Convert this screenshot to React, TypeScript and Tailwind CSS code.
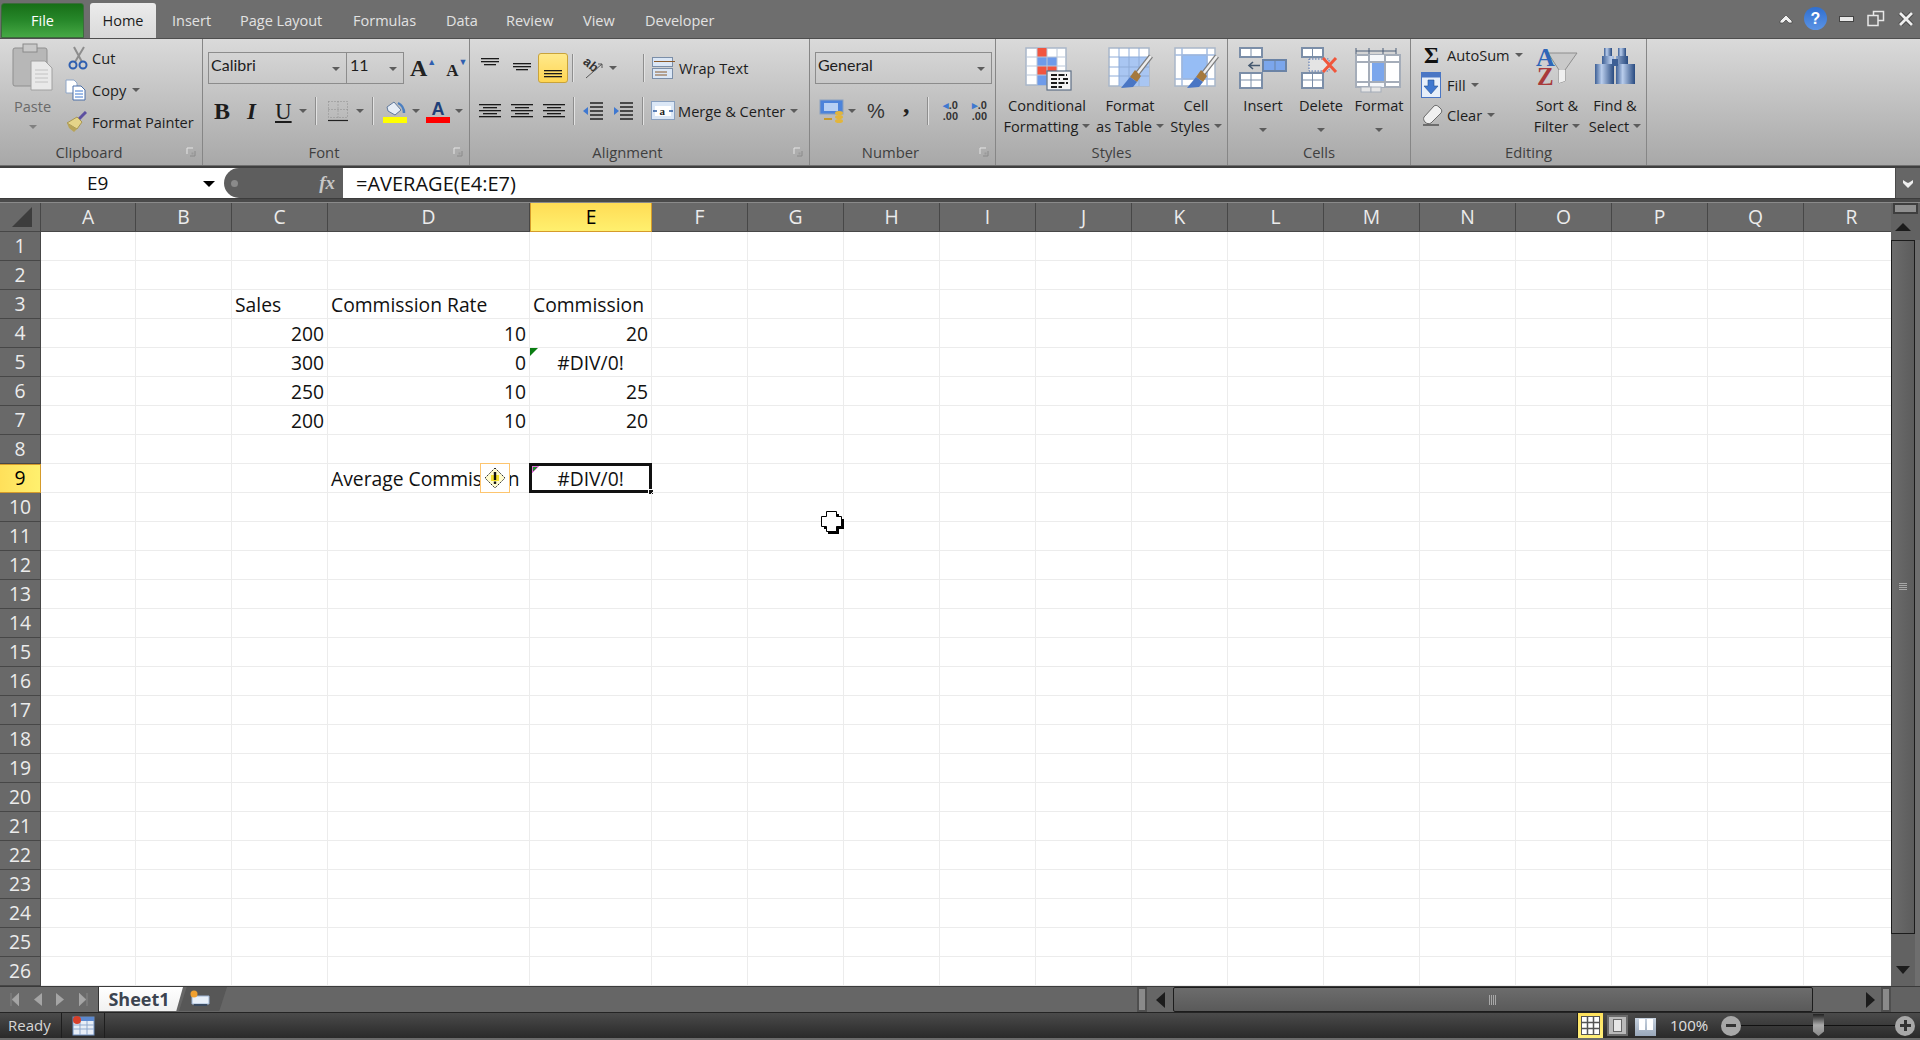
import React from 'react';

const columns = ['A', 'B', 'C', 'D', 'E', 'F', 'G', 'H', 'I', 'J', 'K', 'L', 'M', 'N', 'O', 'P', 'Q', 'R'];
const rows = Array.from({ length: 26 }, (_, i) => i + 1);

type CellValue = { text: string; align: 'left' | 'right' | 'center' };

const cells: Record<string, CellValue> = {
  C3: { text: 'Sales', align: 'left' },
  D3: { text: 'Commission Rate', align: 'left' },
  E3: { text: 'Commission', align: 'left' },
  C4: { text: '200', align: 'right' },
  D4: { text: '10', align: 'right' },
  E4: { text: '20', align: 'right' },
  C5: { text: '300', align: 'right' },
  D5: { text: '0', align: 'right' },
  E5: { text: '#DIV/0!', align: 'center' },
  C6: { text: '250', align: 'right' },
  D6: { text: '10', align: 'right' },
  E6: { text: '25', align: 'right' },
  C7: { text: '200', align: 'right' },
  D7: { text: '10', align: 'right' },
  E7: { text: '20', align: 'right' },
  D9: { text: 'Average Commission', align: 'left' },
  E9: { text: '#DIV/0!', align: 'center' },
};

const alignClass = {
  left: 'justify-start pl-[3px]',
  right: 'justify-end pr-[3px]',
  center: 'justify-center',
};

function Caret({ className = '' }: { className?: string }) {
  return <span className={`inline-block w-0 h-0 border-x-[4px] border-t-[4px] border-x-transparent border-t-[#5c5c5c] ${className}`} />;
}

function Lines({ widths, top = 0, color = '#1a1a1a' }: { widths: number[]; top?: number; color?: string }) {
  return (
    <svg width="24" height="20" viewBox="0 0 24 20">
      {widths.map((w, i) => (
        <rect key={i} x={(24 - w) / 2} y={top + i * 3} width={w} height="1.3" fill={color} />
      ))}
    </svg>
  );
}

function Launcher() {
  return (
    <svg className="absolute right-[6px] bottom-[8px]" width="10" height="10" viewBox="0 0 10 10">
      <path d="M1 1H7M1 1V7" stroke="#e4e4e4" fill="none" />
      <path d="M9 4V9H4" stroke="#8a8a8a" fill="none" />
      <rect x="5.5" y="5.5" width="2" height="2" fill="#9a9a9a" />
    </svg>
  );
}

function Group({ className, label, launcher, children }: { className: string; label: string; launcher?: boolean; children: React.ReactNode }) {
  return (
    <div className={`relative flex flex-col border-r border-[#868686] ${className}`}>
      <div className="h-[101px] overflow-visible">{children}</div>
      <div className={`h-[24px] flex items-center justify-center text-[14.8px] text-[#3f3f3f] ${launcher ? 'pr-[24px]' : ''}`}>{label}</div>
      {launcher && <Launcher />}
    </div>
  );
}

function VSep({ className = '' }: { className?: string }) {
  return <div className={`w-[2px] h-[28px] bg-[#8e8e8e] border-r border-[#e2e2e2] ${className}`} />;
}

function Brush() {
  return (
    <g>
      <path d="M44 9L30 27" stroke="#7c7c7c" strokeWidth="5" />
      <path d="M44 9L30 27" stroke="#ededed" strokeWidth="2.5" />
      <path d="M28 23L34 29L30 35L23 30Z" fill="#a5793d" />
      <path d="M23 30L30 35L26 40L14 41Z" fill="#4a76c4" />
    </g>
  );
}

function ConditionalIcon() {
  return (
    <svg width="50" height="44" viewBox="0 0 50 44">
      <rect x="2" y="1" width="40" height="37" fill="#fff" stroke="#a9b7c9" strokeWidth="1.5" />
      <rect x="13" y="1" width="10" height="9" fill="#f2553f" />
      <rect x="13" y="10" width="20" height="9" fill="#6e9bea" />
      <rect x="13" y="19" width="20" height="9" fill="#f2553f" />
      <rect x="13" y="28" width="10" height="10" fill="#6e9bea" />
      <path d="M2 10H42M2 19H42M2 28H42M13 1V38M23 1V38M33 1V38" stroke="#b9c6d8" strokeWidth="1" fill="none" />
      <rect x="23" y="24" width="24" height="19" fill="#f4f4f4" stroke="#5e6f85" strokeWidth="1.2" />
      <path d="M27 28H43M27 32H36M39 32H44M27 36H44M27 40H38" stroke="#1a1a1a" strokeWidth="2" strokeDasharray="6 1.5" />
    </svg>
  );
}

function FormatTableIcon() {
  return (
    <svg width="50" height="44" viewBox="0 0 50 44">
      <rect x="2" y="1" width="40" height="38" fill="#fff" stroke="#a9b7c9" strokeWidth="1.5" />
      <rect x="12" y="10" width="30" height="29" fill="#a9c6f2" />
      <path d="M2 10H42M2 20H42M2 29H42M12 1V39M22 1V39M32 1V39" stroke="#8facd8" strokeWidth="1" fill="none" />
      <Brush />
    </svg>
  );
}

function CellStylesIcon() {
  return (
    <svg width="50" height="44" viewBox="0 0 50 44">
      <rect x="2" y="1" width="40" height="38" fill="#fff" stroke="#a9b7c9" strokeWidth="1.5" />
      <rect x="9" y="8" width="25" height="24" fill="#96bdf5" stroke="#6f97d8" />
      <path d="M2 8H42M2 32H42M9 1V39M34 1V39" stroke="#a4bce0" strokeWidth="1.5" fill="none" />
      <Brush />
    </svg>
  );
}

function InsertIcon() {
  return (
    <svg width="48" height="42" viewBox="0 0 48 42">
      <rect x="1" y="1" width="22" height="9" fill="#fff" stroke="#7b8ea8" strokeWidth="2" />
      <path d="M12 1V10" stroke="#7b8ea8" />
      <rect x="1" y="26" width="22" height="15" fill="#fff" stroke="#7b8ea8" strokeWidth="2" />
      <path d="M12 26V41M1 33H23" stroke="#7b8ea8" />
      <rect x="24" y="13" width="23" height="11" fill="#7ba6ec" stroke="#6b83a5" strokeWidth="2" />
      <path d="M36 13V24" stroke="#6b83a5" />
      <path d="M21 18.5H11M14 15L10 18.5L14 22" stroke="#45586f" strokeWidth="1.6" fill="none" />
    </svg>
  );
}

function DeleteIcon() {
  return (
    <svg width="40" height="42" viewBox="0 0 40 42">
      <rect x="1" y="1" width="21" height="9" fill="#fff" stroke="#7b8ea8" strokeWidth="2" />
      <path d="M11.500 1V10" stroke="#7b8ea8" />
      <rect x="1" y="26" width="21" height="15" fill="#fff" stroke="#7b8ea8" strokeWidth="2" />
      <path d="M11.500 26V41M1 33H22" stroke="#7b8ea8" />
      <rect x="8" y="12" width="20" height="12" fill="#e4e4e4" stroke="#4d6fb0" strokeDasharray="1.500 1.500" />
      <path d="M22 11L35 25M35 11L22 25" stroke="#f0563b" strokeWidth="3" />
    </svg>
  );
}

function FormatCellsIcon() {
  return (
    <svg width="48" height="46" viewBox="0 0 48 46">
      <path d="M1 1V7M41 1V7M1 4H41M14 1V7M28 1V7" stroke="#4c5f78" strokeWidth="1" fill="none" />
      <rect x="1" y="8" width="44" height="32" fill="#fff" stroke="#a5adb9" strokeWidth="2" />
      <rect x="14" y="8" width="16" height="32" fill="#f5f7fa" />
      <rect x="17" y="15" width="13" height="20" fill="#7ba6ec" />
      <path d="M1 15H45M1 35H45M14 8V40M30 8V40" stroke="#a5adb9" strokeWidth="2" fill="none" />
      <rect x="6" y="40" width="10" height="5" fill="#e6e6e6" stroke="#a5adb9" />
      <rect x="16" y="40" width="10" height="5" fill="#e6e6e6" stroke="#a5adb9" />
    </svg>
  );
}

function SortIcon() {
  return (
    <svg width="42" height="42" viewBox="0 0 42 42" className="overflow-visible">
      <path d="M12 7H41L29 24V35L23 37V24Z" fill="#c9c9c9" stroke="#8e8e8e" />
      <path d="M23 24H29V35L23 37Z" fill="#efefef" />
      <text x="0" y="20" fontFamily="Liberation Serif" fontWeight="700" fontSize="26" fill="#2f66b8">A</text>
      <text x="1" y="39" fontFamily="Liberation Serif" fontWeight="700" fontSize="25" fill="#a83a3a">Z</text>
    </svg>
  );
}

function FindIcon() {
  return (
    <svg width="42" height="38" viewBox="0 0 42 38">
      <defs>
        <linearGradient id="binoc" x1="0" y1="0" x2="1" y2="0">
          <stop offset="0" stopColor="#3d5f95" />
          <stop offset="0.35" stopColor="#b9cdec" />
          <stop offset="1" stopColor="#284a80" />
        </linearGradient>
      </defs>
      <rect x="10" y="1" width="8" height="8" fill="url(#binoc)" />
      <rect x="24" y="1" width="8" height="8" fill="url(#binoc)" />
      <path d="M8 9H20V18H8ZM22 9H34V18H22Z" fill="url(#binoc)" />
      <rect x="1" y="17" width="19" height="20" fill="url(#binoc)" />
      <rect x="22" y="17" width="19" height="20" fill="url(#binoc)" />
      <rect x="18" y="12" width="6" height="7" fill="#3d5f95" />
    </svg>
  );
}

function Ribbon() {
  return (
    <div className="h-[127px] flex bg-gradient-to-b from-[#dadada] to-[#a8a8a8] border-t border-[#4e4e4e] font-['Open_Sans',sans-serif] text-[14.6px] text-[#1d1d1d] leading-none">
      <Group className="w-[203px]" label="Clipboard" launcher>
        <div className="flex">
          <div className="w-[65px] flex flex-col items-center pt-[4px]">
            <svg width="42" height="48" viewBox="0 0 42 48">
              <rect x="1" y="5" width="34" height="38" rx="2" fill="#b7b7b7" stroke="#8f8f8f" />
              <rect x="11" y="1" width="14" height="8" fill="#c9c9c9" stroke="#8a8a8a" />
              <path d="M19 18H33L40 25V47H19Z" fill="#e9e9e9" stroke="#a0a0a0" />
              <path d="M23 27H36M23 31H36M23 35H36M23 39H36" stroke="#c2c2c2" />
            </svg>
            <span className="mt-[8px] text-[#6a6a6a]">Paste</span>
            <Caret className="mt-[11px] border-t-[#808080]" />
          </div>
          <div className="flex flex-col pt-[3px]">
            <div className="h-[32px] flex items-center">
              <svg width="22" height="24" viewBox="0 0 22 24" className="ml-[2px] mr-[3px]">
                <path d="M7 1L15 16M17 1L8 16" stroke="#8d8d8d" strokeWidth="2" />
                <circle cx="6" cy="19" r="3.500" fill="none" stroke="#2f5fb0" strokeWidth="2" />
                <circle cx="16" cy="19" r="3.500" fill="none" stroke="#2f5fb0" strokeWidth="2" />
              </svg>
              <span>Cut</span>
            </div>
            <div className="h-[32px] flex items-center">
              <svg width="22" height="22" viewBox="0 0 22 22" className="mr-[5px]">
                <path d="M1 1H9L12 4V14H1Z" fill="#fff" stroke="#8ea6c8" />
                <path d="M8 7H16L20 11V21H8Z" fill="#fff" stroke="#4a6fa8" />
                <path d="M10 12H18M10 15H18M10 18H18" stroke="#3f78d0" />
              </svg>
              <span>Copy</span>
              <Caret className="ml-[6px]" />
            </div>
            <div className="h-[32px] flex items-center">
              <svg width="22" height="22" viewBox="0 0 22 22" className="mr-[5px]">
                <path d="M21 1L14 8" stroke="#5c4fa0" strokeWidth="3" />
                <path d="M12 6L17 11L12 18L2 12Z" fill="#e5d489" stroke="#a89754" />
                <path d="M2 12L12 18L9 21L4 17Z" fill="#b8a458" />
              </svg>
              <span>Format Painter</span>
            </div>
          </div>
        </div>
      </Group>

      <Group className="w-[267px]" label="Font" launcher>
        <div className="pt-[13px] flex items-center h-[45px] pl-[5px]">
          <div className="w-[139px] h-[32px] border border-[#8c8c8c] flex items-center justify-between pl-[2px] pr-[6px] pb-[6px]">
            <span className="font-['Lato'] text-[16px]">Calibri</span>
            <Caret className="mt-[8px]" />
          </div>
          <div className="w-[57px] h-[32px] border border-l-0 border-[#8c8c8c] flex items-center justify-between pl-[3px] pr-[6px] pb-[6px]">
            <span className="font-['Lato'] text-[16px]">11</span>
            <Caret className="mt-[8px]" />
          </div>
          <span className="ml-[6px] font-['Liberation_Serif'] font-bold text-[24px] text-[#222]">A</span>
          <span className="text-[#2f5fb0] text-[9px] -mt-[14px]">▲</span>
          <span className="ml-[10px] font-['Liberation_Serif'] font-bold text-[17px] text-[#222] mt-[4px]">A</span>
          <span className="text-[#2f5fb0] text-[9px] -mt-[14px]">▼</span>
        </div>
        <div className="mt-[11px] flex items-center h-[32px] pl-[11px]">
          <span className="w-[20px] font-['Liberation_Serif'] font-bold text-[24px] text-[#1c1c1c]">B</span>
          <span className="ml-[13px] w-[12px] font-['Liberation_Serif'] italic font-bold text-[23px] text-[#1c1c1c]">I</span>
          <span className="ml-[16px] w-[17px] font-['Liberation_Serif'] underline text-[23px] text-[#1c1c1c]">U</span>
          <Caret className="ml-[7px]" />
          <VSep className="ml-[8px]" />
          <svg width="22" height="22" viewBox="0 0 22 22" className="ml-[10px]">
            <rect x="1.500" y="1.500" width="19" height="16" fill="none" stroke="#8c8c8c" strokeDasharray="1 2" />
            <path d="M11 1.500V17.500M1.500 9.500H20.500" stroke="#8c8c8c" strokeDasharray="1 2" />
            <path d="M1 20.500H21" stroke="#222" strokeWidth="1.200" />
          </svg>
          <Caret className="ml-[7px]" />
          <VSep className="ml-[8px]" />
          <div className="ml-[9px] flex flex-col items-center w-[24px]">
            <svg width="22" height="17" viewBox="0 0 22 17">
              <path d="M3 7L10 2L17 10L11 15L4 11Z" fill="#e6edf6" stroke="#627a9c" />
              <path d="M14 3C18 5 20 9 20 13" stroke="#4c7fc0" strokeWidth="2.500" fill="none" />
            </svg>
            <div className="w-[24px] h-[6px] bg-[#ffff00]" />
          </div>
          <Caret className="ml-[5px]" />
          <div className="ml-[6px] flex flex-col items-center w-[24px]">
            <span className="font-['Liberation_Sans'] font-bold text-[18px] text-[#1f3f78] h-[17px] leading-[18px]">A</span>
            <div className="w-[24px] h-[6px] bg-[#ff0000]" />
          </div>
          <Caret className="ml-[5px]" />
        </div>
      </Group>

      <Group className="w-[340px]" label="Alignment" launcher>
        <div className="pt-[13px] flex items-center h-[45px] pl-[8px]">
          <div className="w-[24px] h-[24px]"><Lines widths={[18, 18, 12]} top={2} /></div>
          <div className="ml-[8px] w-[24px] h-[24px]"><Lines widths={[18, 18, 12]} top={7} /></div>
          <div className="ml-[4px] w-[30px] h-[30px] flex items-end justify-center bg-gradient-to-b from-[#ffe98a] to-[#ffd652] border border-[#c9a33a] rounded-[3px]">
            <Lines widths={[18, 18, 18]} top={8} />
          </div>
          <VSep className="ml-[4px]" />
          <svg width="24" height="24" viewBox="0 0 24 24" className="ml-[7px] overflow-visible">
            <text x="1" y="12" transform="rotate(40 8 10)" fontFamily="Liberation Sans" fontWeight="700" fontSize="13" fill="#333">ab</text>
            <path d="M5 22L21 8M17 8H21V12" stroke="#555" fill="none" />
          </svg>
          <Caret className="ml-[4px]" />
          <VSep className="ml-[26px]" />
          <svg width="24" height="24" viewBox="0 0 24 24" className="ml-[7px]">
            <rect x="0.500" y="1.500" width="20" height="9" fill="#dbe7f6" stroke="#7b8ea8" />
            <rect x="0.500" y="12.500" width="20" height="10" fill="#dbe7f6" stroke="#7b8ea8" />
            <path d="M2 5.500H23M3 16H15M3 19H15" stroke="#8a5a2c" />
          </svg>
          <span className="ml-[3px]">Wrap Text</span>
        </div>
        <div className="mt-[11px] flex items-center h-[32px] pl-[8px]">
          <div className="w-[24px] h-[20px]"><Lines widths={[22, 14, 22, 14, 22]} top={3} /></div>
          <div className="ml-[8px] w-[24px] h-[20px]"><Lines widths={[22, 14, 22, 14, 22]} top={3} /></div>
          <div className="ml-[8px] w-[24px] h-[20px]"><Lines widths={[22, 14, 22, 14, 22]} top={3} /></div>
          <VSep className="ml-[7px]" />
          <svg width="22" height="20" viewBox="0 0 22 20" className="ml-[7px]">
            <path d="M8 2H21M8 6H21M8 10H21M8 14H21M8 18H21" stroke="#222" strokeWidth="1.300" />
            <path d="M1 10L6 6V14Z" fill="#3f78d0" />
          </svg>
          <svg width="22" height="20" viewBox="0 0 22 20" className="ml-[8px]">
            <path d="M8 2H21M8 6H21M8 10H21M8 14H21M8 18H21" stroke="#222" strokeWidth="1.300" />
            <path d="M7 10L2 6V14Z" fill="#3f78d0" />
          </svg>
          <VSep className="ml-[8px]" />
          <svg width="24" height="20" viewBox="0 0 24 20" className="ml-[7px]">
            <rect x="0.500" y="0.500" width="23" height="18" fill="#dbe7f6" stroke="#8aa0be" />
            <rect x="4" y="5" width="16" height="10" fill="#fff" />
            <path d="M2 10H6M22 10H18" stroke="#2c5ba0" strokeWidth="1.500" />
            <text x="8.500" y="14" fontFamily="Liberation Serif" fontWeight="700" fontSize="11" fill="#222">a</text>
          </svg>
          <span className="ml-[3px]">Merge &amp; Center</span>
          <Caret className="ml-[5px]" />
        </div>
      </Group>

      <Group className="w-[186px]" label="Number" launcher>
        <div className="pt-[13px] flex items-center h-[45px] pl-[5px]">
          <div className="w-[177px] h-[32px] border border-[#8c8c8c] flex items-center justify-between pl-[2px] pr-[6px] pb-[6px]">
            <span className="font-['Lato'] text-[16px]">General</span>
            <Caret className="mt-[8px]" />
          </div>
        </div>
        <div className="mt-[11px] flex items-center h-[32px] pl-[9px]">
          <svg width="25" height="24" viewBox="0 0 25 24">
            <rect x="1" y="1" width="23" height="14" fill="#4c83da" stroke="#8aa0be" />
            <rect x="5" y="4" width="14" height="8" fill="#b7d0f3" />
            <ellipse cx="20" cy="14" rx="4" ry="2" fill="#e2b53b" />
            <ellipse cx="20" cy="18" rx="4" ry="2" fill="#e2b53b" />
            <ellipse cx="20" cy="22" rx="4" ry="2" fill="#e2b53b" />
            <path d="M5 20H13" stroke="#c79a2a" strokeWidth="2" />
          </svg>
          <Caret className="ml-[4px]" />
          <span className="ml-[11px] w-[20px] text-[20px] text-[#333] font-['Liberation_Sans']">%</span>
          <span className="ml-[16px] w-[8px] font-['Liberation_Serif'] font-bold text-[26px] -mt-[12px] text-[#222]">,</span>
          <VSep className="ml-[16px]" />
          <div className="ml-[9px] w-[20px] flex flex-col items-end font-['Liberation_Sans'] text-[11px] leading-[11px] font-bold text-[#333]">
            <span><span className="text-[#3f78d0]">◂</span>.0</span>
            <span>.00</span>
          </div>
          <div className="ml-[9px] w-[20px] flex flex-col items-end font-['Liberation_Sans'] text-[11px] leading-[11px] font-bold text-[#333]">
            <span><span className="text-[#3f78d0]">▸</span>.0</span>
            <span>.00</span>
          </div>
        </div>
      </Group>

      <Group className="w-[232px]" label="Styles">
        <div className="flex pt-[8px] text-center">
          <div className="w-[98px] flex flex-col items-center pl-[4px]">
            <div className="h-[44px] ml-[4px]"><ConditionalIcon /></div>
            <span className="mt-[7px]">Conditional</span>
            <span className="mt-[6px] flex items-center whitespace-nowrap">Formatting<Caret className="ml-[4px]" /></span>
          </div>
          <div className="w-[72px] flex flex-col items-center">
            <div className="h-[44px] ml-[4px]"><FormatTableIcon /></div>
            <span className="mt-[7px]">Format</span>
            <span className="mt-[6px] flex items-center whitespace-nowrap">as Table<Caret className="ml-[4px]" /></span>
          </div>
          <div className="w-[60px] flex flex-col items-center">
            <div className="h-[44px] ml-[4px]"><CellStylesIcon /></div>
            <span className="mt-[7px]">Cell</span>
            <span className="mt-[6px] flex items-center whitespace-nowrap">Styles<Caret className="ml-[4px]" /></span>
          </div>
        </div>
      </Group>

      <Group className="w-[183px]" label="Cells">
        <div className="flex pt-[8px] pl-[6px]">
          {[
            { label: 'Insert', icon: <InsertIcon /> },
            { label: 'Delete', icon: <DeleteIcon /> },
            { label: 'Format', icon: <FormatCellsIcon /> },
          ].map((item) => (
            <div key={item.label} className="w-[58px] flex flex-col items-center">
              <div className="h-[44px] flex items-start justify-center">{item.icon}</div>
              <span className="mt-[7px]">{item.label}</span>
              <Caret className="mt-[15px]" />
            </div>
          ))}
        </div>
      </Group>

      <Group className="w-[236px]" label="Editing">
        <div className="flex">
          <div className="w-[117px] pl-[10px] pt-[1px] flex flex-col">
            <div className="h-[30px] flex items-center">
              <span className="w-[26px] pl-[3px] font-['Liberation_Serif'] font-bold text-[23px] text-[#111]">Σ</span>
              <span>AutoSum</span>
              <Caret className="ml-[5px]" />
            </div>
            <div className="h-[30px] flex items-center">
              <svg width="20" height="26" viewBox="0 0 20 26" className="mr-[6px]">
                <rect x="0.500" y="0.500" width="19" height="25" fill="#e7effa" stroke="#4a76c4" />
                <rect x="0.500" y="0.500" width="19" height="5" fill="#4a76c4" />
                <path d="M7 8H13V14H17L10 22L3 14H7Z" fill="#3f78d0" stroke="#27508f" strokeWidth="0.600" />
              </svg>
              <span>Fill</span>
              <Caret className="ml-[5px]" />
            </div>
            <div className="h-[30px] flex items-center">
              <svg width="22" height="22" viewBox="0 0 22 22" className="mr-[4px]">
                <path d="M3 13L13 2C14 1 16 1 18 3L20 5C21 6 21 8 20 9L10 19C8 20 6 20 4 18C3 17 2 15 3 13Z" fill="#f0f0f0" stroke="#6a6a6a" />
                <path d="M2 21H18" stroke="#222" />
              </svg>
              <span>Clear</span>
              <Caret className="ml-[5px]" />
            </div>
          </div>
          <div className="w-[58px] flex flex-col items-center pt-[7px]">
            <div className="h-[44px]"><SortIcon /></div>
            <span className="mt-[8px]">Sort &amp;</span>
            <span className="mt-[6px] flex items-center">Filter<Caret className="ml-[4px]" /></span>
          </div>
          <div className="w-[58px] flex flex-col items-center pt-[8px]">
            <div className="h-[43px]"><FindIcon /></div>
            <span className="mt-[8px]">Find &amp;</span>
            <span className="mt-[6px] flex items-center">Select<Caret className="ml-[4px]" /></span>
          </div>
        </div>
      </Group>
    </div>
  );
}

function FormulaBar() {
  return (
    <div className="h-[38px] flex flex-col bg-[#6a6a6a]">
      <div className="h-[3px] bg-[#3f3f3f] border-t border-[#6e6e6e]" />
      <div className="h-[30px] flex bg-white font-['Open_Sans',sans-serif] text-[19px] text-[#111]">
        <div className="w-[224px] flex items-center justify-between pl-[87px] pr-[9px] pt-[1px]">
          <span>E9</span>
          <span className="w-0 h-0 border-x-[6px] border-t-[6px] border-x-transparent border-t-black" />
        </div>
        <div className="w-[119px] bg-[#5e5e5e] rounded-l-[15px] flex items-center justify-between pl-[7px] pr-[8px]">
          <span className="w-[7px] h-[7px] rounded-full bg-[#8a8a8a]" />
          <span className="font-['Liberation_Serif'] italic font-bold text-[19px] text-[#c7c7c7]">fx</span>
        </div>
        <div className="flex-1 flex items-center pl-[13px] pt-[1px] text-[20px]">=AVERAGE(E4:E7)</div>
        <div className="w-[25px] bg-[#666] border-l border-[#4a4a4a] flex items-center justify-center">
          <svg width="12" height="9" viewBox="0 0 12 9"><path d="M1 1L4 3L6 4L8 3L11 1V4L6 9L1 4Z" fill="#eee" /></svg>
        </div>
      </div>
      <div className="flex-1 bg-[#4a4a4a] border-t border-[#3c3c3c] border-b border-b-[#8a8a8a]" />
    </div>
  );
}

function Sheet() {
  return (
    <div className="relative grid grid-cols-[41px_95px_96px_96px_202px_122px_repeat(13,96px)] auto-rows-[29px] font-['Open_Sans',sans-serif] text-[19.3px] text-[#111] bg-white overflow-hidden">
      <div className="bg-[#696969] border-b border-r border-[#474747] flex items-center justify-center">
        <svg width="20" height="20" viewBox="0 0 20 20" className="ml-[4px]"><path d="M20 0V20H0Z" fill="#3d3d3d" /></svg>
      </div>
      {columns.map((col) => (
        <div
          key={col}
          className={col === 'E'
            ? 'flex items-center justify-center bg-gradient-to-b from-[#ffdc55] to-[#fff06e] border border-t-0 border-[#d59b2a] text-black'
            : 'flex items-center justify-center bg-[#696969] border-r border-b border-[#474747] text-[#ececec]'}
        >
          {col}
        </div>
      ))}
      {rows.map((row) => (
        <React.Fragment key={row}>
          <div
            className={row === 9
              ? 'flex items-center justify-center bg-gradient-to-r from-[#ffe05a] to-[#fff06e] border border-l-0 border-[#d59b2a] text-black'
              : 'flex items-center justify-center bg-[#696969] border-r border-b border-[#474747] text-[#ececec]'}
          >
            {row}
          </div>
          {columns.map((col) => {
            const id = `${col}${row}`;
            const value = cells[id];
            return (
              <div key={id} className="relative border-r border-b border-[#ececec]">
                {value && (
                  <div className={`absolute inset-0 pt-[3px] flex items-center whitespace-nowrap ${alignClass[value.align]}`}>{value.text}</div>
                )}
                {id === 'E5' && (
                  <svg className="absolute left-0 top-0" width="8" height="8" viewBox="0 0 8 8"><path d="M0 0H8L0 8Z" fill="#0a7d12" /></svg>
                )}
                {id === 'D9' && (
                  <div className="absolute right-[19px] -top-px w-[30px] h-[30px] bg-white border border-[#fdc56f] flex items-center justify-center">
                    <svg width="22" height="22" viewBox="0 0 22 22">
                      <path d="M11 1L21 11L11 21L1 11Z" fill="#fffbd0" stroke="#222" strokeDasharray="1.500 1" />
                      <path d="M7 11H15" stroke="#f4e12f" strokeWidth="6" />
                      <rect x="9.800" y="5" width="2.400" height="8" fill="#111" />
                      <rect x="9.800" y="14.500" width="2.400" height="2.400" fill="#111" />
                    </svg>
                  </div>
                )}
                {id === 'E9' && (
                  <>
                    <div className="absolute -left-px -top-px w-[123px] h-[30px] border-[3px] border-[#111]" />
                    <svg className="absolute left-[2px] top-[2px]" width="7" height="7" viewBox="0 0 7 7"><path d="M0.500 0.500H6.500L0.500 6.500Z" fill="#1f8f2a" stroke="#e070d8" /></svg>
                    <div className="absolute -right-[3px] -bottom-[3px] w-[6px] h-[6px] bg-[#111] border border-white" />
                  </>
                )}
              </div>
            );
          })}
        </React.Fragment>
      ))}
      <svg className="absolute left-[821px] top-[308px]" width="23" height="23" viewBox="0 0 23 23">
        <path d="M7 3H18V8H23V18H18V23H7V18H3V8H7Z" fill="#000" />
        <path d="M5.500 0.500H15.500V5.500H20.500V15.500H15.500V20.500H5.500V15.500H0.500V5.500H5.500Z" fill="#fff" stroke="#000" />
      </svg>
    </div>
  );
}

function VerticalScroll() {
  return (
    <div className="w-[29px] h-[783px] flex flex-col bg-[#626262] overflow-hidden">
      <div className="h-[11px] mx-[2px] bg-[#8f8f8f] border-2 border-[#3e3e3e]" />
      <div className="h-[26px] flex items-center justify-center pr-[5px]">
        <span className="w-0 h-0 border-x-[8px] border-b-[8px] border-x-transparent border-b-[#1c1c1c]" />
      </div>
      <div className="flex flex-1 min-h-0">
        <div className="w-[24px] flex flex-col">
          <div className="h-[694px] bg-gradient-to-r from-[#6c6c6c] to-[#5c5c5c] border-x border-y border-[#1c1c1c] flex items-center justify-center">
            <svg width="8" height="8" viewBox="0 0 8 8"><path d="M0 0.500H8M0 2.500H8M0 4.500H8M0 6.500H8" stroke="#a8a8a8" /></svg>
          </div>
          <div className="flex-1 flex items-center justify-center pt-[20px]">
            <span className="w-0 h-0 border-x-[7px] border-t-[8px] border-x-transparent border-t-[#1c1c1c]" />
          </div>
        </div>
        <div className="flex-1 bg-[#6e6e6e]" />
      </div>
    </div>
  );
}

function TabStrip() {
  return (
    <div className="h-[26px] flex bg-[#666] border-t border-[#3a3a3a]">
      <div className="w-[99px] flex items-center justify-between px-[9px] border-r border-[#333] bg-[#6a6a6a]">
        <svg width="10" height="13" viewBox="0 0 10 13"><path d="M2 0V13M10 0L3 6.500L10 13Z" fill="#a5a5a5" stroke="#a5a5a5" strokeWidth="0.500" /></svg>
        <svg width="8" height="13" viewBox="0 0 8 13"><path d="M8 0L0 6.500L8 13Z" fill="#a5a5a5" /></svg>
        <svg width="8" height="13" viewBox="0 0 8 13"><path d="M0 0L8 6.500L0 13Z" fill="#a5a5a5" /></svg>
        <svg width="10" height="13" viewBox="0 0 10 13"><path d="M8 0V13M0 0L7 6.500L0 13Z" fill="#a5a5a5" stroke="#a5a5a5" strokeWidth="0.500" /></svg>
      </div>
      <div className="w-[84px] h-[24px] bg-gradient-to-b from-white to-[#f1f1f1] flex items-center justify-center pr-[4px] font-['Open_Sans',sans-serif] font-bold text-[18px] text-[#3c4450] [clip-path:polygon(0_0,100%_0,92%_100%,0_100%)]">Sheet1</div>
      <div className="w-[48px] h-[24px] -ml-[4px] bg-[#575757] flex items-center justify-center pr-[6px] [clip-path:polygon(16%_0,100%_0,84%_100%,0_100%)]">
        <svg width="22" height="18" viewBox="0 0 22 18">
          <path d="M3 6H20V14H3Z" fill="#e8f0fa" stroke="#9db4d4" />
          <path d="M5 15H18" stroke="#3a4a60" strokeWidth="2" />
          <circle cx="5" cy="4" r="3.500" fill="#f0a030" />
        </svg>
      </div>
      <div className="w-[910px] bg-[#666]" />
      <div className="w-[10px] h-[25px] bg-[#8a8a8a] border-2 border-[#4e4e4e]" />
      <div className="w-[26px] flex items-center justify-center">
        <span className="w-0 h-0 border-y-[8px] border-r-[9px] border-y-transparent border-r-[#1c1c1c]" />
      </div>
      <div className="w-[640px] h-[25px] bg-gradient-to-b from-[#6c6c6c] to-[#5a5a5a] border border-[#1c1c1c] rounded-[2px] flex items-center justify-center">
        <svg width="8" height="10" viewBox="0 0 8 10"><path d="M0.500 0V10M2.500 0V10M4.500 0V10M6.500 0V10" stroke="#a8a8a8" /></svg>
      </div>
      <div className="w-[68px] flex items-center justify-end pr-[6px]">
        <span className="w-0 h-0 border-y-[8px] border-l-[9px] border-y-transparent border-l-[#1c1c1c]" />
      </div>
      <div className="w-[10px] h-[25px] bg-[#8a8a8a] border-2 border-[#4e4e4e]" />
      <div className="flex-1 bg-[#626262]" />
    </div>
  );
}

function StatusBar() {
  return (
    <div className="h-[26px] flex items-center bg-gradient-to-b from-[#4b4b4b] to-[#2a2a2a] border-t border-[#242424] font-['Open_Sans',sans-serif] text-[15px] text-[#d6d6d6]">
      <span className="w-[62px] pl-[8px] h-full flex items-center border-r border-[#1e1e1e]">Ready</span>
      <div className="w-[43px] h-full flex items-center justify-center border-r border-[#1e1e1e]">
        <svg width="23" height="20" viewBox="0 0 23 20">
          <rect x="1" y="1" width="21" height="18" fill="#e8eef7" stroke="#6f8fc0" />
          <rect x="1" y="1" width="21" height="4" fill="#5b88cf" />
          <path d="M1 9H22M1 13H22M8 5V19M15 5V19" stroke="#8fa8cc" />
          <circle cx="5" cy="4" r="4" fill="#d8402a" />
        </svg>
      </div>
      <div className="flex-1" />
      <div className="w-[26px] h-full bg-gradient-to-b from-[#ffe25c] to-[#ffef7a] flex items-center justify-center border-l border-[#1e1e1e]">
        <svg width="19" height="19" viewBox="0 0 19 19">
          <rect x="0.500" y="0.500" width="18" height="18" fill="#fff" stroke="#555" />
          <path d="M0 6.500H19M0 12.500H19M6.500 0V19M12.500 0V19" stroke="#555" strokeWidth="1.500" />
        </svg>
      </div>
      <div className="ml-[4px] w-[21px] h-[21px] bg-[#b9b9b9] border-2 border-[#6a6a6a] flex items-center justify-center">
        <div className="w-[9px] h-[13px] bg-[#e6e6e6] border border-[#666]" />
      </div>
      <div className="ml-[7px] w-[21px] h-[21px] bg-gradient-to-b from-[#c7d2df] to-[#9aa8ba] border-t-[3px] border-[#444] flex gap-[2px] pt-[1px] justify-center">
        <div className="w-[6px] h-[11px] bg-white" />
        <div className="w-[6px] h-[11px] bg-white" />
      </div>
      <span className="ml-[14px] w-[43px] text-[#e0e0e0]">100%</span>
      <div className="ml-[8px] w-[20px] h-[20px] rounded-full bg-[#a8a8a8] flex items-center justify-center">
        <div className="w-[10px] h-[3px] bg-[#333]" />
      </div>
      <div className="relative w-[154px] h-[1px] bg-[#111]">
        <div className="absolute left-[72px] -top-[11px] w-[11px] h-[22px] bg-gradient-to-b from-[#222] via-[#aaa] to-[#888] [clip-path:polygon(0_0,100%_0,100%_80%,50%_100%,0_80%)]" />
      </div>
      <div className="w-[20px] h-[20px] rounded-full bg-[#a8a8a8] flex items-center justify-center mr-[5px] relative">
        <div className="w-[11px] h-[3px] bg-[#333]" />
        <div className="absolute w-[3px] h-[11px] bg-[#333]" />
      </div>
    </div>
  );
}

export default function App() {
  return (
    <div className="w-[1920px] h-[1040px] overflow-hidden flex flex-col bg-[#6b6b6b]">
      <div className="h-[38px] flex items-center bg-[#6e6e6e] font-['Open_Sans',sans-serif] text-[14.5px] text-[#e2e2e2]">
        <div className="self-end ml-[1px] w-[83px] h-[35px] flex items-center justify-center rounded-t-[3px] bg-gradient-to-b from-[#176f17] via-[#27882a] to-[#45a844] border border-[#3c6b3c] text-white">File</div>
        <div className="self-end ml-[6px] w-[66px] h-[35px] flex items-center justify-center rounded-t-[3px] bg-gradient-to-b from-[#ececec] to-[#dadada] text-[#1c1c1c]">Home</div>
        <span className="ml-[16px] w-[39px] pt-[3px]">Insert</span>
        <span className="ml-[29px] w-[84px] pt-[3px]">Page Layout</span>
        <span className="ml-[29px] w-[64px] pt-[3px]">Formulas</span>
        <span className="ml-[29px] w-[31px] pt-[3px]">Data</span>
        <span className="ml-[29px] w-[49px] pt-[3px]">Review</span>
        <span className="ml-[28px] w-[34px] pt-[3px]">View</span>
        <span className="ml-[28px] w-[71px] pt-[3px]">Developer</span>
        <div className="flex-1 self-stretch flex items-center justify-end pr-[5px] pb-[1px]">
          <svg width="14" height="10" viewBox="0 0 14 10" className="mr-[11px]"><path d="M7 1L13 7V9H10L7 6L4 9H1V7Z" fill="#f0f0f0" stroke="#444" strokeWidth="0.700" /></svg>
          <div className="w-[23px] h-[23px] rounded-full bg-gradient-to-b from-[#2f6fd0] to-[#5b93e4] flex items-center justify-center font-['Liberation_Sans'] font-bold text-[16px] text-white mr-[12px]">?</div>
          <div className="w-[15px] h-[6px] bg-[#e8e8e8] border border-[#444] mr-[13px]" />
          <svg width="18" height="17" viewBox="0 0 18 17" className="mr-[13px]">
            <rect x="6.500" y="1.500" width="10" height="9" fill="none" stroke="#e8e8e8" strokeWidth="1.500" />
            <rect x="1" y="5.500" width="10" height="10" fill="#6e6e6e" stroke="#e8e8e8" strokeWidth="1.500" />
          </svg>
          <svg width="16" height="14" viewBox="0 0 16 14" className="mr-[1px]"><path d="M2 1L14 13M14 1L2 13" stroke="#444" strokeWidth="4.500" /><path d="M2 1L14 13M14 1L2 13" stroke="#eee" strokeWidth="2.800" /></svg>
        </div>
      </div>
      <Ribbon />
      <FormulaBar />
      <div className="flex h-[783px]">
        <div className="w-[1891px] overflow-hidden"><Sheet /></div>
        <VerticalScroll />
      </div>
      <TabStrip />
      <StatusBar />
    </div>
  );
}
